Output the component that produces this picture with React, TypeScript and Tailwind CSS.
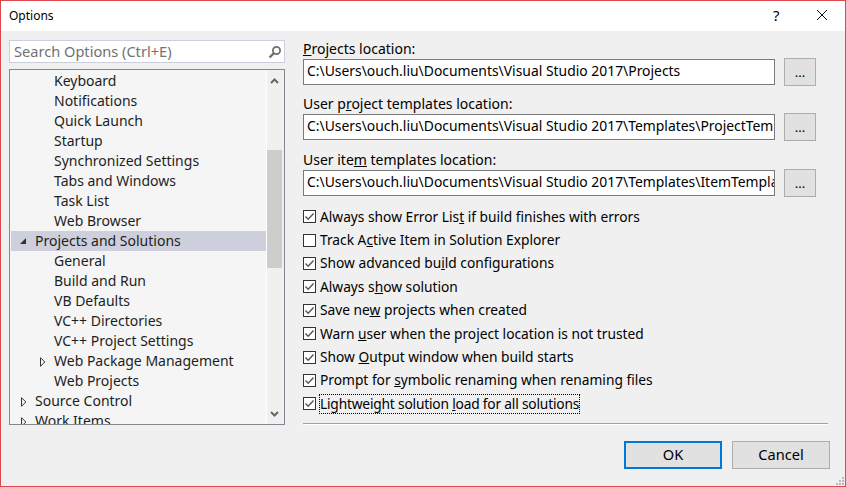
const font = "font-['Noto_Sans','Open_Sans',sans-serif]";

const treeRows: { label: string; indent: number; arrow?: 'open' | 'closed'; selected?: boolean }[] = [
  { label: 'Keyboard', indent: 43 },
  { label: 'Notifications', indent: 43 },
  { label: 'Quick Launch', indent: 43 },
  { label: 'Startup', indent: 43 },
  { label: 'Synchronized Settings', indent: 43 },
  { label: 'Tabs and Windows', indent: 43 },
  { label: 'Task List', indent: 43 },
  { label: 'Web Browser', indent: 43 },
  { label: 'Projects and Solutions', indent: 24, arrow: 'open', selected: true },
  { label: 'General', indent: 43 },
  { label: 'Build and Run', indent: 43 },
  { label: 'VB Defaults', indent: 43 },
  { label: 'VC++ Directories', indent: 43 },
  { label: 'VC++ Project Settings', indent: 43 },
  { label: 'Web Package Management', indent: 43, arrow: 'closed' },
  { label: 'Web Projects', indent: 43 },
  { label: 'Source Control', indent: 24, arrow: 'closed' },
  { label: 'Work Items', indent: 24, arrow: 'closed' },
];

const checks: { before: string; u: string; after: string; checked: boolean; focus?: boolean }[] = [
  { before: 'Always show Error Lis', u: 't', after: ' if build finishes with errors', checked: true },
  { before: 'Track A', u: 'c', after: 'tive Item in Solution Explorer', checked: false },
  { before: 'Show advanced bu', u: 'i', after: 'ld configurations', checked: true },
  { before: 'Always s', u: 'h', after: 'ow solution', checked: true },
  { before: 'Save ne', u: 'w', after: ' projects when created', checked: true },
  { before: 'Warn ', u: 'u', after: 'ser when the project location is not trusted', checked: true },
  { before: 'Show ', u: 'O', after: 'utput window when build starts', checked: true },
  { before: 'Prompt for ', u: 's', after: 'ymbolic renaming when renaming files', checked: true },
  { before: 'Lightweight solution ', u: 'l', after: 'oad for all solutions', checked: true, focus: true },
];

const locations = [
  { before: '', u: 'P', after: 'rojects location:', value: 'C:\\Users\\ouch.liu\\Documents\\Visual Studio 2017\\Projects' },
  { before: 'User p', u: 'r', after: 'oject templates location:', value: 'C:\\Users\\ouch.liu\\Documents\\Visual Studio 2017\\Templates\\ProjectTem' },
  { before: 'User ite', u: 'm', after: ' templates location:', value: 'C:\\Users\\ouch.liu\\Documents\\Visual Studio 2017\\Templates\\ItemTempla' },
];

function Arrow({ open }: { open: boolean }) {
  return open ? (
    <svg width="6" height="6" viewBox="0 0 6 6" className="absolute left-[-15px] top-[7px]">
      <path d="M6 0V6H0Z" fill="#333" />
    </svg>
  ) : (
    <svg width="6" height="10" viewBox="0 0 6 10" className="absolute left-[-14px] top-[6px]">
      <path d="M0.5 0.7L4.8 5L0.5 9.3Z" fill="none" stroke="#333" />
    </svg>
  );
}

function Tree() {
  return (
    <div className="h-[356px] flex border border-[#828790] bg-[#f5f5f5] overflow-hidden">
      <div className="w-[256px] pt-px pl-px overflow-hidden">
        {treeRows.map((row) => (
          <div
            key={row.label}
            className={`h-5 shrink-0 text-[14px] leading-5 whitespace-nowrap text-[#1e1e1e] ${row.selected ? 'bg-[#cdd0dc]' : ''}`}
            style={{ paddingLeft: row.indent }}
          >
            <span className="relative inline-block">
              {row.arrow && <Arrow open={row.arrow === 'open'} />}
              {row.label}
            </span>
          </div>
        ))}
      </div>
      <div className="w-px bg-white" />
      <div className="w-[17px] bg-[#f0f0f0] flex flex-col items-start">
        <div className="w-[15px] h-[14px] flex items-center justify-center mt-[4px]">
          <svg width="9" height="6" viewBox="0 0 9 6">
            <path d="M1 5L4.5 1.5L8 5" fill="none" stroke="#666" strokeWidth="2" />
          </svg>
        </div>
        <div className="w-[15px] h-[118px] mt-[62px] bg-[#cdcdcd]" />
        <div className="w-[15px] h-[14px] flex items-center justify-center mt-[139px]">
          <svg width="9" height="6" viewBox="0 0 9 6">
            <path d="M1 1L4.5 4.5L8 1" fill="none" stroke="#666" strokeWidth="2" />
          </svg>
        </div>
      </div>
    </div>
  );
}

function Check({ checked }: { checked: boolean }) {
  return (
    <div className="w-[13px] h-[13px] border border-[#333] bg-white flex items-center justify-center shrink-0">
      {checked && (
        <svg width="11" height="11" viewBox="0 0 11 11">
          <path d="M1.5 5.5L4.2 8.2L9.5 2.5" fill="none" stroke="#555" strokeWidth="1.4" />
        </svg>
      )}
    </div>
  );
}

export default function App() {
  return (
    <div className={`w-[846px] h-[487px] flex flex-col border border-[#e0464e] bg-[#f0f0f0] overflow-hidden text-[14px] text-black ${font}`}>
      <div className="h-[30px] shrink-0 bg-white flex items-center pl-2 relative">
        <span className="text-[12px]">Options</span>
        <span className="absolute left-[772px] top-[3px] text-[15px]">?</span>
        <svg width="12" height="12" viewBox="0 0 12 12" className="absolute left-[815px] top-[8px]">
          <path d="M1 1L11 11M11 1L1 11" stroke="#111" strokeWidth="1" />
        </svg>
      </div>
      <div className="flex-1 flex pl-2 relative">
        <div className="w-[276px] shrink-0 pt-[9px] flex flex-col gap-[6px]">
          <div className="h-[23px] border border-[#cccedb] bg-white flex items-center justify-between pl-1 pr-[2px]">
            <span className="text-[#717171] text-[14.6px] leading-[20px] mb-[2px]">Search Options (Ctrl+E)</span>
            <svg width="14" height="14" viewBox="0 0 14 14">
              <circle cx="8.5" cy="5.5" r="3.6" fill="none" stroke="#707070" strokeWidth="1.8" />
              <path d="M6 8L1.5 12.5" stroke="#707070" strokeWidth="2.4" />
            </svg>
          </div>
          <Tree />
        </div>
        <div className="w-[527px] ml-[18px] shrink-0 pt-[9px] flex flex-col">
          <div className="flex flex-col gap-[9px]">
            {locations.map((loc) => (
              <div key={loc.after} className="last:mt-px">
                <div className="h-[18px] leading-[18px] whitespace-nowrap">
                  {loc.before}<u>{loc.u}</u>{loc.after}
                </div>
                <div className="flex items-center">
                  <div className="w-[472px] h-[26px] border border-[#7a7a7a] bg-white pl-[3px] text-[13.9px] leading-[22px] overflow-hidden whitespace-nowrap">
                    {loc.value}
                  </div>
                  <div className="ml-[9px] w-8 h-7 border border-[#adadad] bg-[#e1e1e1] flex items-center justify-center text-[13px] leading-none">
                    ...
                  </div>
                </div>
              </div>
            ))}
          </div>
          <div className="mt-[10.7px] flex flex-col gap-[5.4px]">
            {checks.map((c) => (
              <div key={c.before} className="h-[18px] flex items-center gap-1">
                <Check checked={c.checked} />
                <span className={`whitespace-nowrap text-[13.75px] leading-[18px] ${c.focus ? 'tracking-[-0.19px] outline outline-1 outline-dotted outline-black' : ''}`}>
                  {c.before}<u>{c.u}</u>{c.after}
                </span>
              </div>
            ))}
          </div>
          <div className="mt-[9.8px] h-[2px] w-[525px] border-t border-[#a0a0a0] bg-white" />
          <div className="mt-[16px] flex gap-[10px] justify-end w-[527px] text-[14.6px]">
            <div className="w-[98px] h-7 border-2 border-[#0078d7] bg-[#e1e1e1] flex items-center justify-center">OK</div>
            <div className="w-[98px] h-7 border border-[#adadad] bg-[#e1e1e1] flex items-center justify-center">Cancel</div>
          </div>
        </div>
        <svg width="11" height="11" viewBox="0 0 11 11" className="absolute right-0 bottom-0">
          <path d="M8 2h2v2h-2zM5 5h2v2h-2zM8 5h2v2h-2zM2 8h2v2h-2zM5 8h2v2h-2zM8 8h2v2h-2z" fill="#b8b8b8" />
        </svg>
      </div>
    </div>
  );
}
